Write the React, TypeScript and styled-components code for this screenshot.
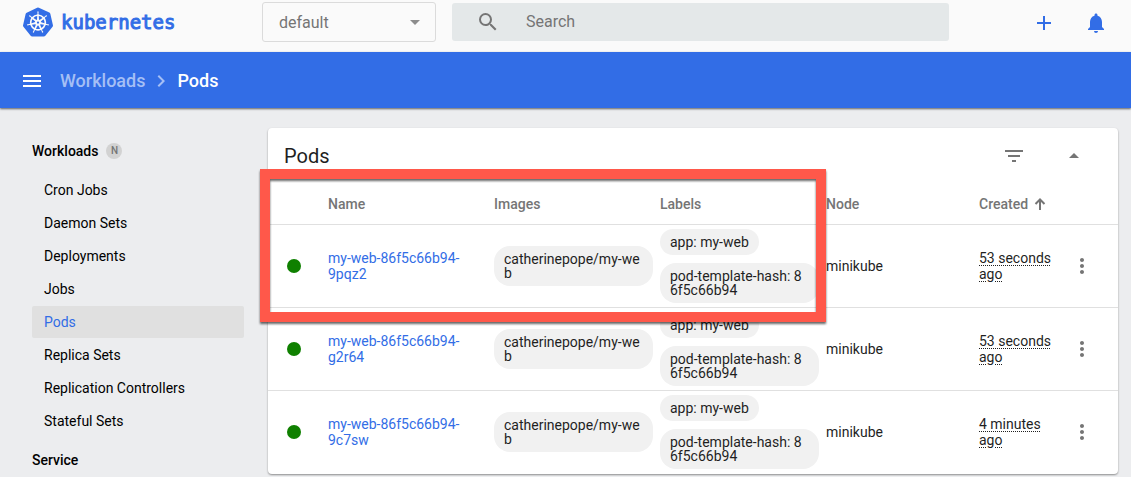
import React from "react";
import styled, { createGlobalStyle, css } from "styled-components";
import { SiKubernetes } from "react-icons/si";
import {
  MdAdd,
  MdArrowDropDown,
  MdArrowDropUp,
  MdChevronRight,
  MdFilterList,
  MdMenu,
  MdMoreVert,
  MdNotifications,
  MdSearch,
} from "react-icons/md";

const blue = "#326de6";
const grey = "#757575";

const GlobalStyle = createGlobalStyle`
  *, *::before, *::after { box-sizing: border-box; }
  body {
    margin: 0;
    background: #ecedef;
    color: #1f1f1f;
    font: 400 14px/16px Roboto, "Liberation Sans", sans-serif;
  }
`;

const TopBar = styled.header`
  display: flex;
  align-items: center;
  padding: 2px 23px 10px;
  background: #fafafa;
`;

const Brand = styled.a`
  display: flex;
  align-items: center;
  gap: 8px;
  flex: 0 0 239px;
  color: ${blue};
  font: 400 19px/24px "DejaVu Sans Mono", monospace;
  -webkit-text-stroke: 1px ${blue};
  text-decoration: none;
`;

const NamespaceField = styled.label`
  display: grid;
  align-items: center;
  flex: 0 0 174px;
  margin-right: 16px;
  color: #8c8c8c;

  > * { grid-area: 1 / 1; }
  > svg {
    justify-self: end;
    margin-right: 9px;
    pointer-events: none;
  }
`;

const NamespaceSelect = styled.select`
  appearance: none;
  width: 100%;
  height: 40px;
  padding: 2px 32px 0 16px;
  border: 1px solid #dbdbdb;
  border-radius: 3px;
  background: transparent;
  color: ${grey};
  font: 400 16px/24px Roboto, sans-serif;
`;

const SearchBox = styled.label`
  display: flex;
  align-items: center;
  flex: 1;
  gap: 26px;
  height: 38px;
  padding: 0 24px;
  border-radius: 3px;
  background: #e4e8e9;
  color: ${grey};
`;

const SearchInput = styled.input`
  flex: 1;
  min-width: 0;
  padding: 0;
  border: 0;
  outline: 0;
  background: transparent;
  font: 400 16px/24px Roboto, sans-serif;

  &::placeholder { color: ${grey}; opacity: 1; }
`;

const TopActions = styled.div`
  display: flex;
  gap: 28px;
  margin: 2px 0 0 83px;
`;

const IconButton = styled.button<{ $color?: string }>`
  display: flex;
  padding: 0;
  border: 0;
  background: none;
  color: ${(p) => p.$color ?? grey};
  cursor: pointer;
`;

const ActionBar = styled.nav`
  position: relative;
  display: flex;
  align-items: center;
  height: 56px;
  padding: 2px 20px 0;
  background: ${blue};
  box-shadow: 0 1px 2px rgba(0, 0, 0, 0.6);
  color: #fff;
  font: 500 18px/24px Roboto, sans-serif;
`;

const Crumb = styled.a<{ $current?: boolean }>`
  color: ${(p) => (p.$current ? "#fff" : "#a5bff5")};
  text-decoration: none;
`;

const CrumbTrail = styled.div`
  display: flex;
  align-items: center;
  gap: 4px;
  margin-left: 16px;
  color: #a5bff5;
`;

const Body = styled.div`
  display: flex;
  align-items: flex-start;
`;

const Sidebar = styled.nav`
  flex: 0 0 268px;
  padding: 27px 24px 0 32px;
  color: #000;
`;

const GroupTitle = styled.h2`
  display: flex;
  align-items: center;
  gap: 8px;
  height: 32px;
  margin: 0;
  font-size: 14px;
  font-weight: 500;
`;

const Badge = styled.span`
  width: 16px;
  border-radius: 50%;
  background: #d2d2d2;
  color: ${grey};
  font-size: 10px;
  text-align: center;
`;

const NavList = styled.ul`
  display: grid;
  gap: 1px;
  margin: 7px 0;
  padding: 0;
  list-style: none;
`;

const NavLink = styled.a<{ $active?: boolean }>`
  display: block;
  padding: 8px 12px;
  border-radius: 2px;
  color: inherit;
  text-decoration: none;
  ${(p) =>
    p.$active &&
    css`
      background: #e0e0e0;
      color: ${blue};
    `}
`;

const Main = styled.main`
  flex: 1;
  min-width: 0;
  padding: 20px 13px 0 0;
`;

const Card = styled.section`
  position: relative;
  border-radius: 4px;
  background: #fff;
  box-shadow: 0 1px 2px rgba(0, 0, 0, 0.4);
`;

const CardHeader = styled.div`
  display: flex;
  align-items: center;
  gap: 36px;
  height: 56px;
  padding: 0 32px 0 16px;
`;

const CardTitle = styled.h1`
  flex: 1;
  margin: 0;
  font: 400 20px/24px Roboto, sans-serif;
`;

const Table = styled.table`
  width: 100%;
  table-layout: fixed;
  border-collapse: separate;
  border-spacing: 0;
`;

const Col = styled.col<{ $width?: number }>`
  width: ${(p) => (p.$width ? `${p.$width}px` : "auto")};
`;

const HeadCell = styled.th`
  height: 41px;
  padding: 0;
  border-bottom: 1px solid #e0e0e0;
  color: ${grey};
  font-weight: 500;
  text-align: left;
`;

const SortLabel = styled.span`
  display: flex;
  align-items: center;
  gap: 6px;
`;

const Row = styled.tr`
  > td { border-bottom: 1px solid #e0e0e0; }
  &:last-child > td { border-color: transparent; }
`;

const Cell = styled.td<{ $indent?: number; $end?: number }>`
  height: 83px;
  padding: 4px ${(p) => p.$end ?? 7}px 4px ${(p) => p.$indent ?? 0}px;
  vertical-align: middle;
`;

const StatusDot = styled.span`
  display: block;
  width: 14px;
  height: 14px;
  border-radius: 50%;
  background: #0f8000;
`;

const PodLink = styled.a`
  color: ${blue};
  text-decoration: none;
`;

const Chips = styled.div`
  display: flex;
  flex-direction: column;
  align-items: flex-start;
  gap: 8px;
`;

const Chip = styled.span`
  padding: 6px 10px;
  border-radius: 16px;
  background: #f1f1f1;
  line-height: 14px;
  word-break: break-all;
`;

const Age = styled.time`
  text-decoration: underline dotted 1px;
  text-underline-offset: 2px;
`;

const Highlight = styled.div`
  position: absolute;
  top: 41px;
  right: 292px;
  left: -8px;
  height: 153px;
  border: 10px solid #ff584a;
  filter: drop-shadow(0 2px 1px rgba(0, 0, 0, 0.6));
  pointer-events: none;
`;

const SortArrow = () => (
  <svg
    width="12"
    height="12"
    viewBox="0 0 12 12"
    fill="none"
    stroke="currentColor"
    strokeWidth="2"
    aria-hidden="true"
  >
    <path d="M6 12V2M1.5 6 6 1.5 10.5 6" />
  </svg>
);

const workloads = [
  "Cron Jobs",
  "Daemon Sets",
  "Deployments",
  "Jobs",
  "Pods",
  "Replica Sets",
  "Replication Controllers",
  "Stateful Sets",
];

const pods = [
  { name: "my-web-86f5c66b94-9pqz2", age: "53 seconds ago" },
  { name: "my-web-86f5c66b94-g2r64", age: "53 seconds ago" },
  { name: "my-web-86f5c66b94-9c7sw", age: "4 minutes ago" },
];

export default function App() {
  return (
    <>
      <GlobalStyle />
      <TopBar>
        <Brand href="#">
          <SiKubernetes size={30} strokeWidth={0} />
          kubernetes
        </Brand>
        <NamespaceField>
          <NamespaceSelect aria-label="Namespace" defaultValue="default">
            <option>default</option>
          </NamespaceSelect>
          <MdArrowDropDown size={24} />
        </NamespaceField>
        <SearchBox>
          <MdSearch size={24} />
          <SearchInput type="text" placeholder="Search" aria-label="Search" />
        </SearchBox>
        <TopActions>
          <IconButton $color={blue} aria-label="Create">
            <MdAdd size={24} />
          </IconButton>
          <IconButton $color={blue} aria-label="Notifications">
            <MdNotifications size={24} />
          </IconButton>
        </TopActions>
      </TopBar>
      <ActionBar>
        <IconButton $color="#fff" aria-label="Toggle menu">
          <MdMenu size={24} />
        </IconButton>
        <CrumbTrail>
          <Crumb href="#">Workloads</Crumb>
          <MdChevronRight size={24} />
          <Crumb href="#" $current>
            Pods
          </Crumb>
        </CrumbTrail>
      </ActionBar>
      <Body>
        <Sidebar>
          <GroupTitle>
            Workloads <Badge>N</Badge>
          </GroupTitle>
          <NavList>
            {workloads.map((item) => (
              <li key={item}>
                <NavLink href="#" $active={item === "Pods"}>
                  {item}
                </NavLink>
              </li>
            ))}
          </NavList>
          <GroupTitle>Service</GroupTitle>
        </Sidebar>
        <Main>
          <Card>
            <CardHeader>
              <CardTitle>Pods</CardTitle>
              <IconButton aria-label="Filter">
                <MdFilterList size={24} />
              </IconButton>
              <IconButton aria-label="Collapse">
                <MdArrowDropUp size={24} />
              </IconButton>
            </CardHeader>
            <Table>
              <colgroup>
                <Col $width={60} />
                <Col />
                <Col />
                <Col />
                <Col $width={153} />
                <Col $width={79} />
                <Col $width={60} />
              </colgroup>
              <thead>
                <tr>
                  <HeadCell aria-label="Status" />
                  <HeadCell>Name</HeadCell>
                  <HeadCell>Images</HeadCell>
                  <HeadCell>Labels</HeadCell>
                  <HeadCell>Node</HeadCell>
                  <HeadCell>
                    <SortLabel>
                      Created <SortArrow />
                    </SortLabel>
                  </HeadCell>
                  <HeadCell aria-label="Actions" />
                </tr>
              </thead>
              <tbody>
                {pods.map((pod) => (
                  <Row key={pod.name}>
                    <Cell $indent={19}>
                      <StatusDot />
                    </Cell>
                    <Cell>
                      <PodLink href="#">{pod.name}</PodLink>
                    </Cell>
                    <Cell>
                      <Chips>
                        <Chip>catherinepope/my-web</Chip>
                      </Chips>
                    </Cell>
                    <Cell>
                      <Chips>
                        <Chip>app: my-web</Chip>
                        <Chip>pod-template-hash: 86f5c66b94</Chip>
                      </Chips>
                    </Cell>
                    <Cell>minikube</Cell>
                    <Cell $end={0}>
                      <Age>{pod.age}</Age>
                    </Cell>
                    <Cell $indent={12}>
                      <IconButton aria-label="More actions">
                        <MdMoreVert size={24} />
                      </IconButton>
                    </Cell>
                  </Row>
                ))}
              </tbody>
            </Table>
            <Highlight />
          </Card>
        </Main>
      </Body>
    </>
  );
}
